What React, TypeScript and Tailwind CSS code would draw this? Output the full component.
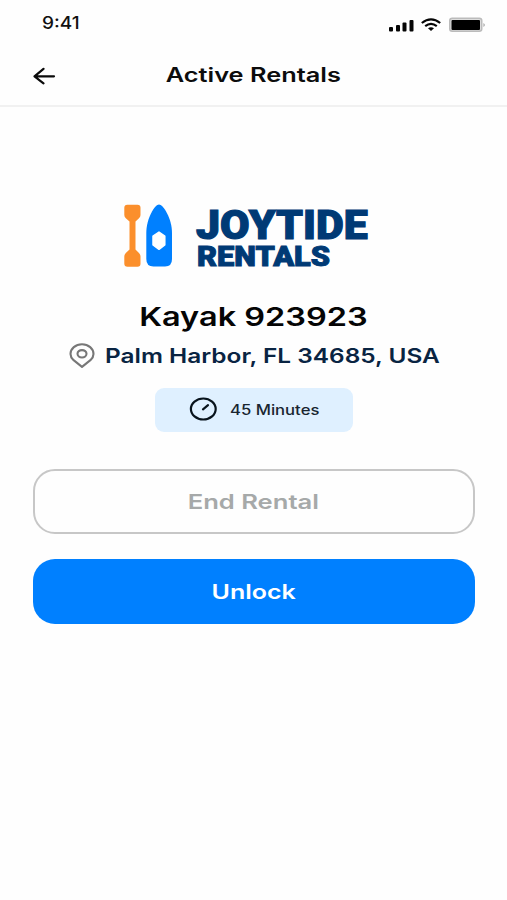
import type { ReactNode } from 'react'

function StatusBar() {
  return (
    <div className="flex h-[44px] items-start justify-between pl-[42px] pr-[21px]">
      <span className="mt-[13px] origin-left scale-x-[1.12] text-[17px] font-medium leading-[20px] text-[#111]">9:41</span>
      <div className="mt-[17px] flex items-start">
        {/* Signal */}
        <svg className="mt-[3px]" width="25" height="12" viewBox="0 0 25 12" fill="#050505">
          <rect x="0" y="7" width="4" height="4.5" rx="1" />
          <rect x="7" y="5" width="4" height="6.5" rx="1" />
          <rect x="13.5" y="2.5" width="4" height="9" rx="1" />
          <rect x="20.5" y="0" width="4" height="11.5" rx="1" />
        </svg>
        {/* Wifi */}
        <svg className="ml-[7px] mt-px" width="20" height="13" viewBox="0 0 20 13" fill="none" stroke="#050505" strokeWidth="2.2">
          <path d="M0.8 5Q10-2.4 19.2 5" />
          <path d="M4.2 8.2Q10 3.6 15.8 8.2" />
          <path d="M7 10.3Q10 8 13 10.3L10 12.9Z" fill="#050505" stroke="none" />
        </svg>
        {/* Battery */}
        <svg className="ml-[8px]" width="37" height="16" viewBox="0 0 37 16">
          <rect x="0.75" y="1.25" width="32" height="13" rx="2.5" fill="#ddd" stroke="#bbb" strokeWidth="1.5" />
          <rect x="2.5" y="3" width="28.5" height="10" rx="1" fill="#000" />
          <path d="M34.5 6Q37 8 34.5 10Z" fill="#999" />
        </svg>
      </div>
    </div>
  )
}

function Header() {
  return (
    <header className="flex h-[63px] items-start border-b-2 border-[#f1f1f1] pl-[33px]">
      <button className="mt-[23px]">
        <svg width="23" height="18" viewBox="0 0 23 18" fill="none" stroke="#0a0a0a" strokeWidth="2.2" strokeLinecap="round" strokeLinejoin="round">
          <path d="M21 9.3H1.5M10.5 1.8L1.5 9.3l9 7" />
        </svg>
      </button>
      <h1 className="mt-[17px] flex-1 pr-[56px] text-center">
        <span className="inline-block scale-x-[1.3] whitespace-nowrap text-[19.5px] font-semibold leading-[28px] text-[#0c0c0c]">Active Rentals</span>
      </h1>
    </header>
  )
}

function Logo() {
  return (
    <div className="ml-[124px] mt-[97px] flex h-[64px]">
      <svg className="shrink-0" width="49" height="64" viewBox="0 0 49 64">
        <path
          d="M3.3 .8H13.5Q16.5 .8 16.5 3.8V11Q16.5 13 15 14.3L11.5 17.5V45.5L15 49Q16.5 50.5 16.5 52.5V59.5Q16.5 62.7 13.5 62.7H3.5Q.3 62.7 .3 59.5V52.5Q.3 50.5 1.8 49L5.5 45.5V17.5L1.8 14.3Q.3 13 .3 11V3.8Q.3 .8 3.3 .8Z"
          fill="#fb8f2c"
        />
        <path
          d="M35 .5C39 .5 48 14 48 29V55Q48 62.5 41 62.5H29.5Q22.3 62.5 22.3 55V29C22.3 14 31 .5 35 .5Z"
          fill="#0080ff"
        />
        <path d="M35 28L40.8 32V41L35 45.3L29 41V32Z" fill="#fff" stroke="#fff" strokeWidth="1.5" strokeLinejoin="round" />
      </svg>
      <div className="ml-[23px] flex flex-col items-start text-[#003a75]">
        <span className="mt-px origin-left scale-x-[1.045] whitespace-nowrap font-['Roboto'] text-[41px] font-black leading-[40px] [-webkit-text-stroke:1.2px_#003a75]">JOYTIDE</span>
        <span className="ml-px origin-left scale-x-[1.1] whitespace-nowrap font-['Roboto'] text-[28px] font-black leading-[24px] [-webkit-text-stroke:1px_#003a75]">RENTALS</span>
      </div>
    </div>
  )
}

function Pin() {
  return (
    <svg className="-mt-[2px] shrink-0" width="26" height="25" viewBox="0 0 26 25" fill="none" stroke="#777" strokeWidth="2.1">
      <path d="M4.6 17.2C2.6 15.3 1.5 13.2 1.5 10.9C1.5 5.5 6.5 1.3 13 1.3S24.5 5.5 24.5 10.9C24.5 13.2 23.4 15.3 21.4 17.2L13 23.8Z" strokeLinejoin="round" />
      <ellipse cx="13" cy="10.8" rx="4.5" ry="3.7" />
    </svg>
  )
}

function Timer() {
  return (
    <svg className="-mt-[2px] shrink-0" width="28" height="24" viewBox="0 0 28 24" fill="none" stroke="#08131c" strokeWidth="2.2" strokeLinecap="round">
      <ellipse cx="14.3" cy="12" rx="12.4" ry="10.5" />
      <path d="M14 12.3L19 8.2" />
    </svg>
  )
}

function ActionButton({ className, children }: { className: string; children: ReactNode }) {
  return (
    <button className={`flex h-[65px] w-[442px] items-center justify-center rounded-[22px] text-[20px] font-semibold ${className}`}>
      {children}
    </button>
  )
}

export default function App() {
  return (
    <main className="h-[900px] w-[507px] overflow-hidden bg-[#fefefe] font-['Inter',sans-serif]">
      <StatusBar />
      <Header />
      <Logo />

      {/* Rental details */}
      <section className="flex flex-col items-center">
        <h2 className="mt-[31px] scale-x-[1.25] whitespace-nowrap text-[26px] font-semibold leading-[36px] text-[#050505]">Kayak 923923</h2>
        <div className="mt-[4px] flex h-[34px] w-[507px] items-center pl-[69px]">
          <Pin />
          <span className="ml-[10px] origin-left scale-x-[1.22] whitespace-nowrap text-[20px] font-semibold text-[#092442]">Palm Harbor, FL 34685, USA</span>
        </div>
        <div className="mt-[15px] flex h-[44px] w-[198px] items-center rounded-[9px] bg-[#dff0ff] pl-[34px]">
          <Timer />
          <span className="-mt-[2px] ml-[13px] origin-left scale-x-[1.19] whitespace-nowrap text-[14px] font-medium text-[#182530]">45 Minutes</span>
        </div>
      </section>

      {/* Actions */}
      <div className="mt-[37px] flex flex-col items-center gap-[25px]">
        <ActionButton className="border-2 border-[#c7c7c7] text-[#a6a9a9]">
          <span className="scale-x-[1.28]">End Rental</span>
        </ActionButton>
        <ActionButton className="bg-[#0080ff] text-white">
          <span className="scale-x-[1.25]">Unlock</span>
        </ActionButton>
      </div>
    </main>
  )
}
